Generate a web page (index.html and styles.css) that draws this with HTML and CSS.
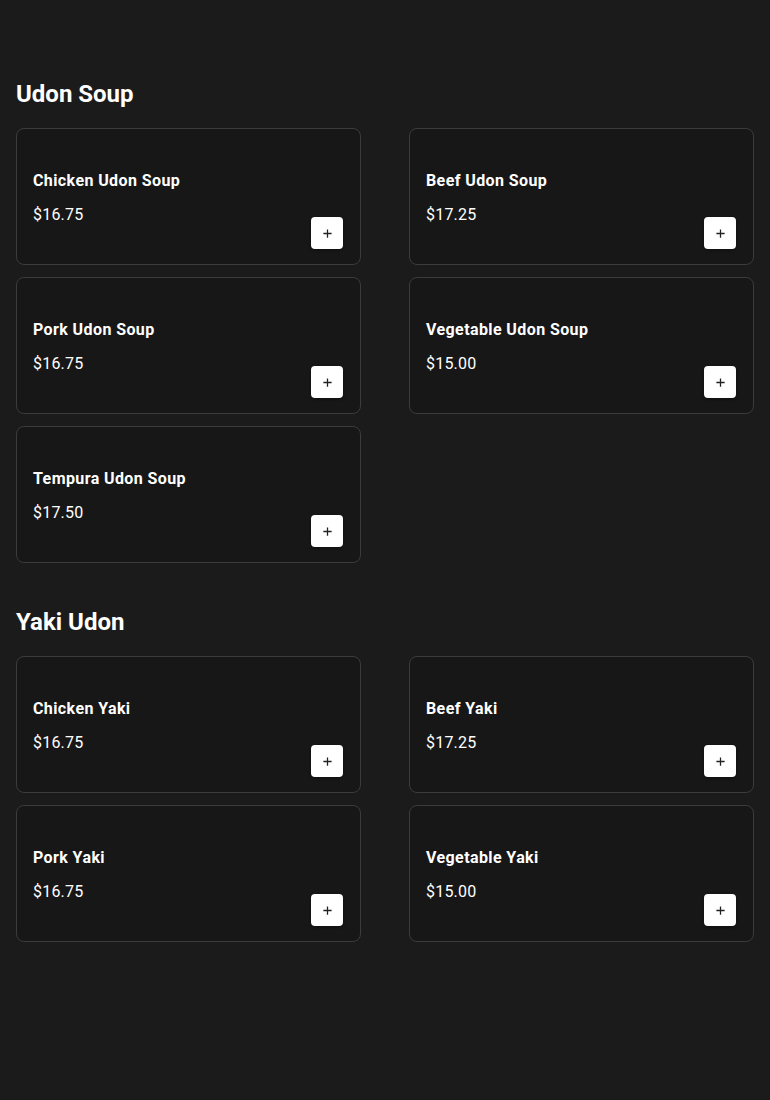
FILE: index.html
```html
<!doctype html>
<html>

<head>
  <meta charset="utf-8">
  <title>Menu</title>
  <link rel="stylesheet" href="styles.css">
</head>

<body>
  <div class="menu">
    <section class="category">
      <h2>Udon Soup</h2>
      <div class="items">
        <div class="item">
          <div class="info">
            <div class="name">Chicken Udon Soup</div>
            <div class="price">$16.75</div>
          </div>
          <button class="add"><svg viewBox="0 0 12 12"><path d="M6 1.5v9M1.5 6h9" /></svg></button>
        </div>
        <div class="item">
          <div class="info">
            <div class="name">Beef Udon Soup</div>
            <div class="price">$17.25</div>
          </div>
          <button class="add"><svg viewBox="0 0 12 12"><path d="M6 1.5v9M1.5 6h9" /></svg></button>
        </div>
        <div class="item">
          <div class="info">
            <div class="name">Pork Udon Soup</div>
            <div class="price">$16.75</div>
          </div>
          <button class="add"><svg viewBox="0 0 12 12"><path d="M6 1.5v9M1.5 6h9" /></svg></button>
        </div>
        <div class="item">
          <div class="info">
            <div class="name">Vegetable Udon Soup</div>
            <div class="price">$15.00</div>
          </div>
          <button class="add"><svg viewBox="0 0 12 12"><path d="M6 1.5v9M1.5 6h9" /></svg></button>
        </div>
        <div class="item">
          <div class="info">
            <div class="name">Tempura Udon Soup</div>
            <div class="price">$17.50</div>
          </div>
          <button class="add"><svg viewBox="0 0 12 12"><path d="M6 1.5v9M1.5 6h9" /></svg></button>
        </div>
      </div>
    </section>

    <section class="category">
      <h2>Yaki Udon</h2>
      <div class="items">
        <div class="item">
          <div class="info">
            <div class="name">Chicken Yaki</div>
            <div class="price">$16.75</div>
          </div>
          <button class="add"><svg viewBox="0 0 12 12"><path d="M6 1.5v9M1.5 6h9" /></svg></button>
        </div>
        <div class="item">
          <div class="info">
            <div class="name">Beef Yaki</div>
            <div class="price">$17.25</div>
          </div>
          <button class="add"><svg viewBox="0 0 12 12"><path d="M6 1.5v9M1.5 6h9" /></svg></button>
        </div>
        <div class="item">
          <div class="info">
            <div class="name">Pork Yaki</div>
            <div class="price">$16.75</div>
          </div>
          <button class="add"><svg viewBox="0 0 12 12"><path d="M6 1.5v9M1.5 6h9" /></svg></button>
        </div>
        <div class="item">
          <div class="info">
            <div class="name">Vegetable Yaki</div>
            <div class="price">$15.00</div>
          </div>
          <button class="add"><svg viewBox="0 0 12 12"><path d="M6 1.5v9M1.5 6h9" /></svg></button>
        </div>
      </div>
    </section>
  </div>
</body>

</html>
```

FILE: styles.css
```css
body {
  margin: 0;
  background-color: #1b1b1b;
  color: #fff;
  font-family: Roboto, "Liberation Sans", sans-serif;
}

.menu {
  padding: 78px 16px 40px;
}

.category {
  margin-bottom: 43px;
}

.category h2 {
  margin: 0 0 18px;
  font-size: 24px;
  line-height: 32px;
  font-weight: 700;
}

.items {
  display: grid;
  grid-template-columns: 1fr 1fr;
  column-gap: 48px;
  row-gap: 12px;
}

.item {
  display: flex;
  justify-content: space-between;
  align-items: flex-end;
  min-height: 137px;
  box-sizing: border-box;
  padding: 16px 17px 15px 16px;
  background-color: #171717;
  border: 1px solid #3c3c3c;
  border-radius: 8px;
}

.info {
  align-self: flex-start;
  padding-top: 24px;
}

.name {
  font-size: 16px;
  line-height: 24px;
  font-weight: 700;
  letter-spacing: 0.4px;
}

.price {
  margin-top: 10px;
  font-size: 16px;
  line-height: 24px;
  letter-spacing: 0.2px;
}

.add {
  display: flex;
  align-items: center;
  justify-content: center;
  width: 32px;
  height: 32px;
  padding: 0;
  border: none;
  border-radius: 4px;
  background-color: #fff;
  box-shadow: 0 1px 3px rgba(0, 0, 0, 0.4);
}

.add svg {
  width: 11px;
  height: 11px;
  fill: none;
  stroke: #222;
  stroke-width: 1.4;
}
```
